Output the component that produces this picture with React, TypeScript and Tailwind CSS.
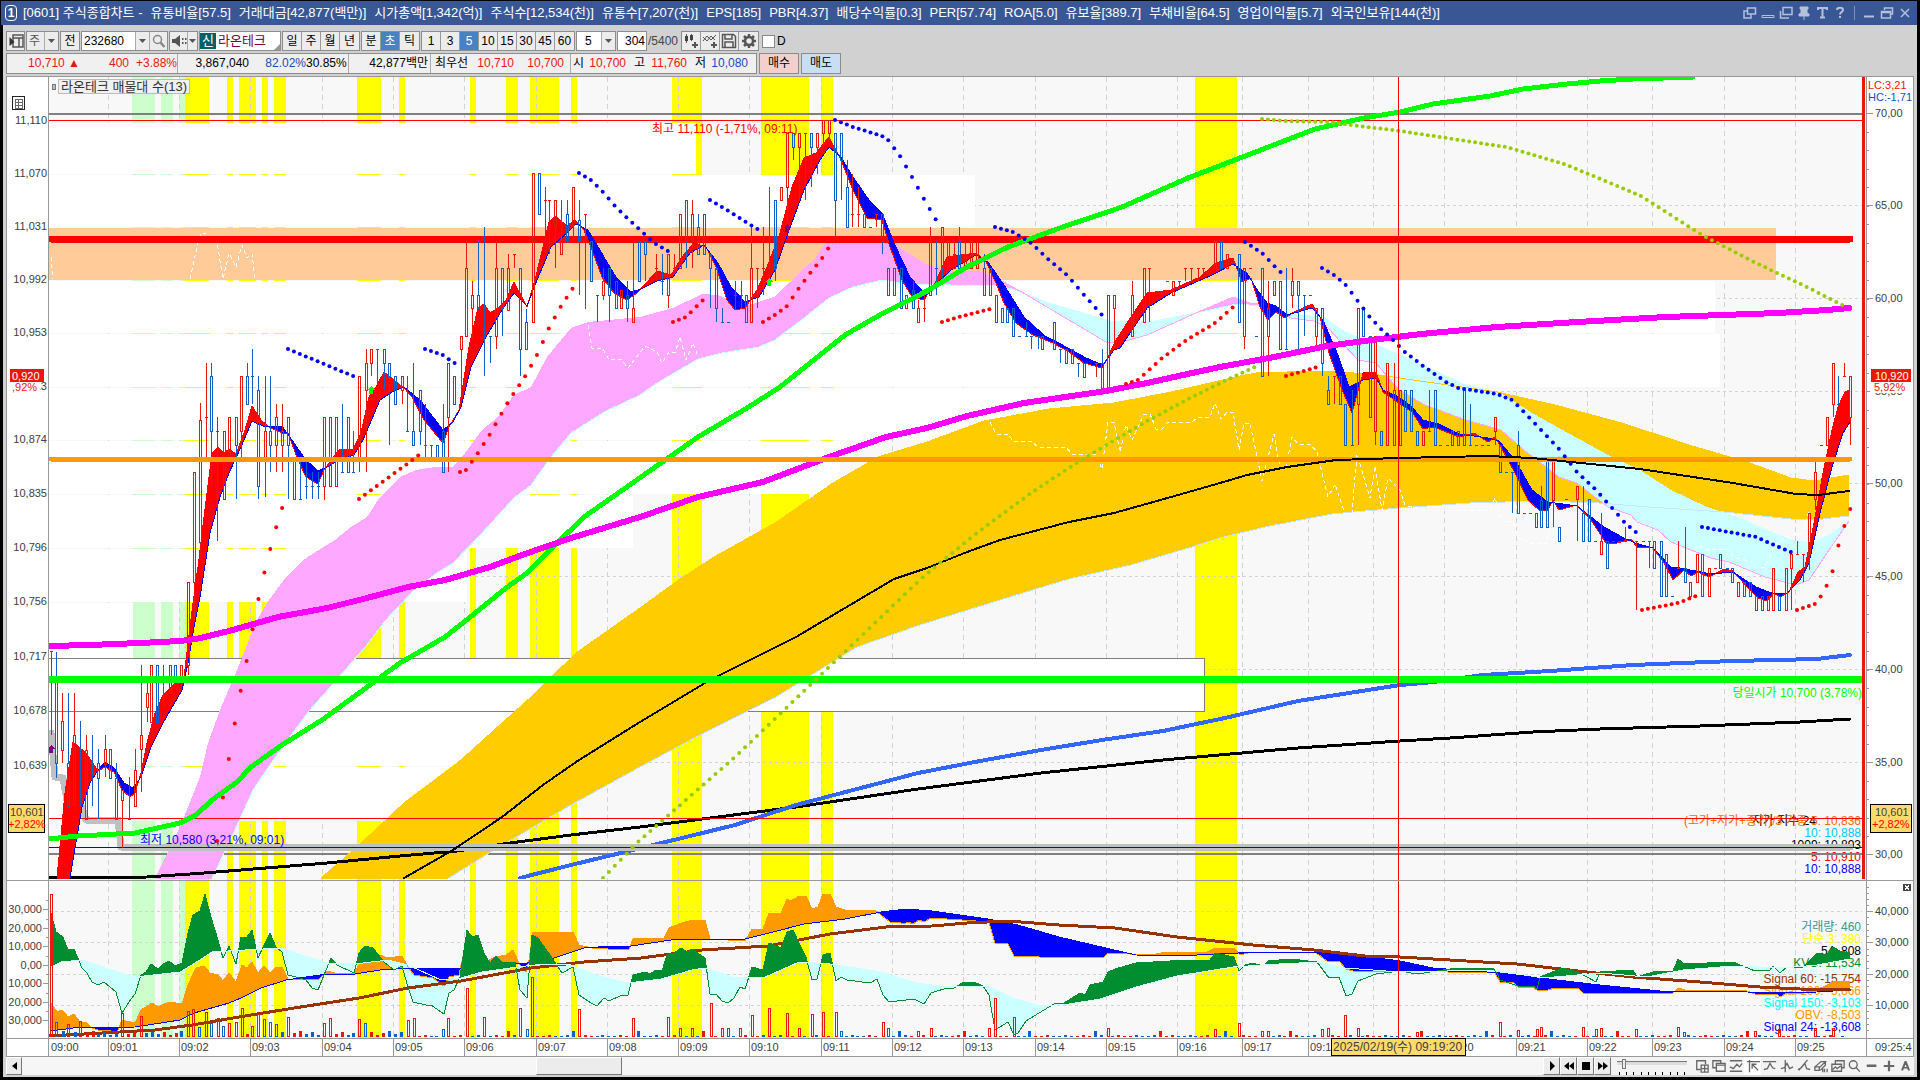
import { type ReactNode } from 'react';

type Point = [number, number];

const FONT = "font-['Liberation_Sans','Noto_Sans_CJK_KR',sans-serif]";

/* ---------- 좌표 유틸 ---------- */

function parse(text: string): Point[] {
  return text
    .trim()
    .split(/\s+/)
    .map((pair) => pair.split(',').map(Number) as Point);
}

function valueAt(points: Point[], x: number) {
  const i = points.findIndex((p) => p[0] >= x);
  if (i === -1) return points[points.length - 1][1];
  if (i === 0) return points[0][1];
  const [x0, y0] = points[i - 1];
  const [x1, y1] = points[i];
  return x1 === x0 ? y1 : y0 + ((y1 - y0) * (x - x0)) / (x1 - x0);
}

function toPolygon(points: Point[]) {
  return points.map(([x, y]) => `${x},${y.toFixed(1)}`).join(' ');
}

// 두 선 사이를 위/아래 구간으로 나눠 채운다
function splitBand(fast: Point[], slow: Point[]) {
  const start = Math.max(fast[0][0], slow[0][0]);
  const end = Math.min(fast[fast.length - 1][0], slow[slow.length - 1][0]);
  const above: Point[] = [];
  const below: Point[] = [];
  const base: Point[] = [];
  for (let x = start; x <= end; x += 1) {
    const f = valueAt(fast, x);
    const s = valueAt(slow, x);
    above.push([x, Math.min(f, s)]);
    below.push([x, Math.max(f, s)]);
    base.unshift([x, s]);
  }
  return { above: toPolygon([...above, ...base]), below: toPolygon([...below, ...base]) };
}

/* ---------- 메인 차트 데이터 ---------- */

const TIMES: [number, string][] = [
  [108, '09:01'],
  [179, '09:02'],
  [250, '09:03'],
  [322, '09:04'],
  [393, '09:05'],
  [464, '09:06'],
  [536, '09:07'],
  [607, '09:08'],
  [678, '09:09'],
  [749, '09:10'],
  [821, '09:11'],
  [892, '09:12'],
  [963, '09:13'],
  [1035, '09:14'],
  [1106, '09:15'],
  [1177, '09:16'],
  [1242, '09:17'],
  [1308, '09:18'],
  [1373, ''],
  [1444, '09:20'],
  [1516, '09:21'],
  [1587, '09:22'],
  [1652, '09:23'],
  [1724, '09:24'],
  [1795, '09:25'],
];

const YELLOW_BANDS = [
  [185, 209], [227, 233], [239, 256], [262, 268], [274, 286], [357, 381], [399, 405],
  [470, 476], [506, 518], [530, 559], [571, 577], [672, 702], [761, 809], [821, 833], [1195, 1237],
];
const GREEN_BANDS = [[132, 155], [161, 173], [179, 185]];

// 매물대: [y, 높이, 오른쪽 끝]
const PROFILE = [
  [123, 51, 696], [175, 52, 975], [281, 52, 1715], [334, 53, 1720], [388, 52, 1190],
  [441, 53, 840], [495, 53, 633], [549, 53, 467], [603, 55, 133], [712, 54, 560], [767, 54, 540],
];

const PINK_LINE = parse(`155,878 180,827 200,777 208,743 220,710 237,670 257,620 269,600 286,577 306,558
  335,540 351,527 367,517 380,497 400,477 416,470 435,467 453,467 465,453 482,430 498,417 514,395 531,387
  547,357 571,328 588,322 640,317 673,308 702,294 718,295 735,302 751,305 775,297 796,277 816,258 829,238
  886,235 902,250 927,265 943,271 980,272 1000,280 1020,291 1106,342 1118,343 1147,335 1196,313 1233,297
  1250,303 1265,305 1291,318 1314,321 1327,327 1358,360 1376,363 1399,390 1425,405 1466,420 1501,430
  1524,450 1559,477 1577,483 1608,507 1631,515 1637,522 1658,530 1671,542 1711,558 1729,562 1765,577
  1796,585 1809,580 1827,553 1849,521`);
const CYAN_LINE = parse(`212,878 229,843 253,790 282,747 310,710 339,677 367,645 384,622 416,588 437,573
  453,563 482,533 514,498 531,485 551,457 571,433 604,412 640,395 657,383 698,359 722,353 759,347 775,340
  804,318 829,298 853,287 882,280 910,284 951,285 992,285 1012,289 1049,303 1090,315 1110,321 1155,321
  1196,313 1237,304 1260,306 1296,315 1323,317 1345,332 1372,343 1412,360 1461,383 1501,393 1532,413
  1559,428 1608,455 1640,470 1671,490 1707,507 1738,517 1774,533 1796,541 1814,542 1832,533 1849,520`);
const GOLD_TOP = parse(`321,878 359,845 404,803 461,760 531,697 576,653 640,608 680,579 714,557 775,523
  833,483 878,457 927,442 984,421 1049,409 1114,403 1171,392 1240,376 1256,373 1318,371 1372,374 1434,383
  1497,392 1555,405 1622,423 1689,445 1747,462 1791,478 1814,481 1849,475`);
const GOLD_BOTTOM = parse(`449,878 494,850 571,805 640,767 700,735 776,697 857,647 920,625 1000,600
  1069,579 1131,565 1192,547 1220,538 1265,527 1332,514 1399,508 1470,503 1541,501 1599,503 1649,507
  1724,512 1791,519 1814,520 1849,516`);
const MAGENTA = `49,646 90,645 140,643 180,641 196,639 229,631 278,617 327,608 367,598 408,587 445,580
  490,567 522,555 571,538 640,517 698,497 763,482 829,457 886,437 927,428 967,416 1024,403 1065,397
  1106,391 1147,383 1192,373 1220,367 1274,357 1327,346 1372,340 1421,334 1497,327 1577,322 1666,317
  1778,313 1827,310 1849,308`;
const GREEN = `49,839 78,836 135,833 180,823 196,815 212,800 237,782 251,767 282,745 322,720 359,693
  400,663 445,637 469,618 506,588 527,573 551,549 584,517 641,477 698,437 747,408 780,387 845,335 878,316
  927,291 967,267 1008,247 1057,229 1122,207 1188,178 1240,158 1315,129 1364,118 1400,112 1433,104
  1490,96 1523,89 1567,84 1600,81 1633,79 1693,77`;
const BLACK_MID = `404,878 453,850 502,817 543,785 576,762 640,722 710,680 796,637 894,579 927,568 967,552
  1000,540 1069,522 1114,513 1171,497 1220,483 1247,475 1287,467 1336,460 1399,458 1488,456 1532,458
  1640,469 1733,483 1796,494 1818,495 1849,491`;
const BLACK_LOW = `49,878 147,877 204,873 327,863 400,856 457,851 510,843 571,835 640,827 796,807 918,789
  1041,773 1163,760 1298,748 1400,741 1450,738 1533,732 1600,729 1700,726 1800,722 1850,719`;
const BLUE_LOW = `520,878 571,865 633,850 735,825 796,805 857,789 918,773 980,761 1041,750 1102,740
  1163,731 1225,718 1298,701 1400,685 1433,682 1483,675 1550,671 1633,665 1733,661 1817,659 1850,655`;

const MA_FAST = parse(`57,878 65,793 73,742 86,753 98,771 105,767 114,772 122,790 130,797 135,793 141,773
  147,743 155,713 163,695 175,683 184,677 190,627 196,580 198,567 204,517 209,477 212,453 218,447 224,453
  229,449 236,454 245,430 252,406 261,420 269,427 282,433 288,433 298,460 306,477 318,484 324,470 339,450
  353,449 361,433 369,397 376,387 384,372 394,380 404,388 412,397 424,420 443,443 449,427 459,410 469,347
  478,308 484,304 490,313 498,308 506,300 514,282 527,307 535,280 549,222 555,216 567,226 575,220 584,230
  592,250 602,277 614,293 627,300 637,293 657,271 671,275 682,257 694,243 706,247 716,267 727,300 735,310
  745,308 757,290 767,267 780,233 792,187 804,158 816,153 829,137 841,160 853,190 867,218 882,220 890,247
  902,280 912,297 924,300 935,283 947,257 976,253 986,262 996,283 1004,303 1016,323 1033,335 1053,343
  1069,352 1084,363 1102,368 1108,357 1116,340 1129,320 1147,293 1171,290 1200,277 1216,263 1233,258
  1242,282 1251,278 1260,307 1268,320 1276,312 1285,318 1294,312 1312,304 1320,317 1329,353 1341,387
  1352,413 1363,373 1376,372 1383,392 1399,403 1412,412 1423,429 1434,427 1459,437 1474,433 1488,442
  1495,437 1501,447 1515,473 1528,500 1539,510 1548,510 1553,500 1559,510 1577,505 1591,520 1606,543
  1617,543 1631,539 1637,547 1653,548 1664,563 1673,580 1684,570 1691,576 1698,572 1709,577 1724,569
  1733,571 1747,587 1758,598 1767,601 1774,593 1780,597 1789,592 1798,572 1805,567 1814,523 1823,473
  1832,430 1838,407 1845,392 1850,390`);
const MA_SLOW = parse(`57,950 70,878 82,807 90,783 98,770 105,762 114,768 124,783 133,788 141,777 151,747
  163,723 182,690 188,663 194,627 200,597 210,533 220,497 229,473 241,447 252,421 265,427 282,426 294,443
  306,460 318,471 327,467 339,460 354,455 363,440 380,400 392,392 404,387 420,400 443,430 453,422 461,407
  471,367 486,337 502,310 514,293 527,306 537,280 551,247 567,233 576,224 588,230 604,257 616,277 631,292
  641,289 657,281 673,277 690,253 704,245 718,263 731,287 745,302 759,297 775,270 788,233 804,190 820,160
  829,147 841,157 853,177 869,200 882,213 894,243 910,277 924,293 935,285 951,270 976,255 988,262
  1004,285 1024,317 1045,336 1057,342 1086,358 1103,365 1114,350 1120,348 1147,308 1171,293 1212,275
  1233,264 1247,273 1256,288 1267,303 1276,306 1287,315 1312,308 1323,320 1338,355 1349,387 1363,380
  1376,378 1383,390 1399,397 1412,407 1423,420 1439,424 1459,434 1488,438 1499,441 1515,460 1532,490
  1548,502 1577,506 1604,527 1622,537 1635,543 1653,548 1671,567 1680,568 1711,574 1733,572 1756,587
  1774,594 1787,593 1800,580 1809,563 1820,513 1832,467 1843,433 1850,422`);

// [x, 고가, 몸통 위, 몸통 아래, 저가]
const RISING = [
  [51,651,651,651,735],[62,693,721,750,763],[74,693,735,805,805],[86,735,750,819,819],[105,735,749,764,777],
  [122,790,790,800,848],[135,749,770,806,806],[141,665,735,749,792],[147,680,693,707,722],[151,665,665,722,722],
  [163,665,680,680,707],[170,665,665,693,693],[181,665,665,680,680],[188,582,582,665,675],[194,472,472,582,620],
  [200,403,420,542,560],[206,363,417,417,458],[229,417,417,458,458],[241,376,376,431,458],[265,376,431,458,497],
  [276,404,417,445,472],[282,404,431,445,472],[324,417,417,486,500],[330,417,417,486,486],[336,417,417,486,486],
  [359,376,376,458,472],[366,349,363,390,472],[371,349,349,363,376],[377,349,349,349,384],[402,376,376,390,404],
  [448,363,363,417,472],[461,336,336,349,392],[466,241,268,336,336],[472,281,295,308,340],[496,241,268,336,349],
  [508,254,268,310,310],[514,254,254,254,268],[533,173,173,322,322],[545,187,200,200,241],[549,200,200,200,254],
  [555,200,200,227,268],[561,200,240,254,254],[573,187,187,225,240],[585,214,214,214,309],[603,268,281,295,300],
  [621,290,290,308,308],[633,240,308,322,322],[656,254,268,268,281],[668,254,254,295,308],[674,254,268,268,268],
  [680,214,214,268,268],[692,200,214,241,268],[735,281,295,295,310],[751,227,268,322,322],[757,268,268,268,308],
  [763,227,268,268,295],[769,187,268,268,268],[781,187,187,200,200],[787,133,133,187,227],[799,133,133,147,200],
  [805,133,133,133,200],[817,133,133,147,174],[823,120,120,133,147],[829,120,120,133,140],[852,174,214,214,227],
  [858,187,214,214,227],[876,214,214,214,227],[906,295,295,308,308],[918,300,308,322,322],[924,295,308,308,322],
  [930,227,241,295,295],[948,241,241,268,268],[954,241,254,268,268],[965,241,254,268,268],[971,241,241,268,268],
  [977,241,241,268,268],[1066,349,349,363,363],[1084,363,363,377,377],[1096,363,363,363,377],[1108,295,295,391,391],
  [1114,295,295,308,349],[1132,281,295,336,336],[1144,268,268,322,322],[1149,268,268,268,322],[1167,281,281,281,281],
  [1173,281,281,295,295],[1179,281,281,281,290],[1185,268,268,268,281],[1191,268,268,268,281],[1198,268,268,268,281],
  [1203,268,268,268,275],[1215,241,241,268,268],[1227,254,254,268,268],[1244,268,268,336,349],[1250,268,268,268,268],
  [1268,281,308,336,376],[1274,281,281,295,295],[1292,268,281,295,308],[1316,308,308,336,349],[1334,376,376,376,404],
  [1358,308,308,404,445],[1375,336,336,431,445],[1387,363,363,445,445],[1394,363,390,445,445],[1400,390,390,445,445],
  [1423,431,431,445,445],[1429,390,431,431,431],[1495,417,417,431,445],[1553,458,458,500,527],[1566,499,499,499,499],
  [1577,486,486,499,541],[1601,513,541,554,554],[1625,527,541,541,541],[1636,541,541,541,610],[1643,541,541,541,541],
  [1649,541,541,541,568],[1678,541,568,568,568],[1690,582,582,596,596],[1697,554,554,582,582],[1709,568,568,596,596],
  [1715,568,568,568,568],[1738,582,582,596,596],[1768,596,596,610,610],[1773,568,568,610,610],[1786,568,568,610,610],
  [1791,550,554,568,610],[1797,541,554,554,554],[1803,554,554,554,582],[1809,513,513,554,570],[1815,458,472,499,510],
  [1821,445,445,445,445],[1827,417,417,445,445],[1833,363,363,404,417],[1844,363,376,376,376],[1850,376,376,417,445],
];
const FALLING = [
  [56,652,680,763,778],[68,693,763,806,806],[80,721,749,749,806],[92,735,763,763,806],[98,749,763,778,819],
  [110,749,749,778,778],[116,763,778,819,819],[129,777,819,819,819],[157,665,665,722,722],[175,665,665,680,680],
  [211,363,376,431,486],[217,417,431,431,541],[224,431,431,499,499],[236,417,417,445,499],[247,363,376,404,404],
  [252,349,376,376,404],[258,376,390,486,499],[270,376,431,445,472],[288,417,417,445,499],[294,458,458,499,499],
  [300,458,499,499,499],[306,458,486,486,499],[312,472,486,486,499],[318,472,486,486,499],[342,404,472,472,472],
  [348,417,417,472,472],[353,431,472,472,472],[384,349,349,363,390],[389,363,363,376,445],[395,376,376,404,404],
  [407,376,431,431,431],[413,363,431,445,445],[420,390,390,431,445],[425,404,445,445,458],[431,445,445,445,458],
  [437,445,445,458,458],[443,404,431,472,472],[454,376,376,404,404],[478,241,295,308,308],[484,227,308,308,376],
  [490,336,336,336,363],[502,268,268,308,336],[520,268,268,349,376],[526,309,322,349,349],[539,173,173,214,214],
  [567,200,214,241,241],[579,200,220,241,295],[591,241,241,281,281],[597,295,295,295,322],[609,268,268,295,322],
  [616,281,281,308,308],[627,281,295,308,322],[639,241,241,281,281],[645,241,241,254,281],[662,254,281,281,295],
  [686,200,200,241,268],[698,214,227,254,254],[704,214,214,254,254],[710,254,254,268,308],[716,268,268,308,322],
  [722,308,322,322,322],[728,322,322,322,322],[741,281,295,295,308],[746,295,295,322,322],[775,200,200,268,281],
  [793,133,133,147,160],[811,133,133,147,187],[835,133,133,200,241],[841,133,133,160,200],[847,160,187,227,227],
  [864,214,214,227,227],[870,227,227,227,227],[882,214,214,241,254],[888,268,268,295,295],[894,268,268,295,295],
  [901,268,268,308,308],[913,281,290,308,308],[936,241,268,268,295],[942,227,227,268,281],[959,227,241,268,268],
  [984,254,268,295,295],[990,268,268,295,295],[996,295,295,322,322],[1002,308,308,322,322],[1007,308,308,322,322],
  [1013,308,308,336,336],[1019,336,336,336,336],[1026,322,336,336,336],[1031,336,336,336,349],[1038,336,336,336,349],
  [1042,336,336,349,349],[1054,322,322,349,349],[1060,349,349,349,363],[1072,349,349,363,363],[1078,363,363,363,377],
  [1102,349,363,391,391],[1221,241,241,268,268],[1239,254,254,322,322],[1256,336,336,336,336],[1262,268,268,376,376],
  [1280,281,281,349,349],[1286,268,349,349,349],[1298,281,281,295,349],[1304,295,295,295,336],[1310,295,295,295,295],
  [1322,308,308,363,376],[1328,376,390,404,404],[1340,376,376,404,404],[1345,404,404,445,445],[1352,390,445,445,445],
  [1363,308,308,336,336],[1370,336,336,417,417],[1381,431,431,445,445],[1405,390,390,431,431],[1411,390,390,431,431],
  [1417,431,431,445,445],[1435,390,390,445,445],[1440,445,445,445,445],[1447,445,445,445,445],[1452,431,431,445,445],
  [1458,431,431,445,445],[1464,390,390,445,445],[1470,404,445,445,445],[1476,445,445,445,445],[1482,445,445,445,445],
  [1488,445,445,445,445],[1500,445,445,472,472],[1506,472,472,472,472],[1512,472,472,472,513],[1518,431,445,513,513],
  [1524,513,513,513,513],[1530,513,513,513,513],[1536,513,513,527,527],[1541,486,500,527,527],[1547,458,458,527,527],
  [1559,527,527,541,541],[1583,486,513,541,541],[1589,499,499,541,541],[1595,541,541,541,541],[1607,541,541,568,568],
  [1613,541,541,541,541],[1619,541,541,541,541],[1654,541,541,568,568],[1661,541,541,596,596],[1666,554,554,596,596],
  [1672,596,596,596,596],[1685,527,568,582,582],[1702,554,554,596,596],[1720,554,554,568,568],[1727,568,568,568,568],
  [1732,568,568,582,582],[1744,582,582,596,596],[1750,582,582,596,596],[1756,596,596,610,610],[1762,596,596,610,610],
  [1779,596,596,610,610],[1838,376,404,404,404],
];

const SAR_BLUE = [
  '288,349 353,376',
  '425,349 443,355 454,363',
  '579,173 591,180 603,192 615,206 627,218 639,229 654,243 668,251',
  '710,200 722,207 757,229',
  '835,120 853,127 882,136 888,140 900,156 912,177 924,199 936,220',
  '995,227 1013,232 1031,243 1048,259 1067,275 1084,295 1102,315',
  '1245,242 1262,253 1280,272',
  '1322,268 1334,275 1345,284 1357,300 1369,316 1381,329 1393,340 1405,352 1423,366 1446,382 1458,388 1497,394 1512,400 1524,412 1541,430 1559,449 1577,472 1595,489 1613,509 1625,523 1637,533',
  '1702,527 1756,537 1774,545 1791,552',
];
const SAR_RED = [
  '217,841 223,797 229,758 235,722 241,689 247,659 252,632 258,601 264,574 270,550 276,528 282,508',
  '359,499 407,464 419,455',
  '460,472 466,470 478,453 490,434 508,402 526,375 538,353 549,328 561,306 573,288',
  '673,322 686,317 704,299',
  '763,322 775,315 787,306 799,288 811,272 823,257 829,247',
  '942,322 959,317 990,309',
  '1126,384 1138,380 1161,359 1185,341 1215,323 1233,307',
  '1286,376 1304,371 1317,367',
  '1642,610 1678,603 1696,596',
  '1797,610 1815,604 1821,596 1827,585 1833,570 1838,547 1844,527 1850,509',
];
const SAR_OLIVE = [
  '603,878 639,841 735,757 924,576 978,532 1031,493 1078,462 1108,444 1149,420 1192,397 1233,377 1257,366',
  '1262,119 1286,121 1329,122 1351,125 1400,131 1506,147 1567,165 1641,196 1702,235 1756,263 1809,288 1842,305',
];

const WHITE_DASHES = [
  '51,257 53,279',
  '190,279 198,243 201,233 206,234 212,241 217,242 223,279 229,253 236,267 242,245 247,258 252,254 255,279',
  '486,304 490,318 498,312',
  '588,325 592,348 603,349 609,360 621,359 628,368 645,346 657,352 662,363 669,352 675,353 680,337 686,360 693,343 698,357',
  '990,422 996,434 1008,434 1013,441 1031,441 1038,447 1066,447 1072,454 1096,454 1102,469 1108,422 1114,422 1120,452 1126,425 1132,440 1144,414 1150,414 1156,429 1162,429 1168,422 1192,422 1198,417 1210,417 1215,403 1221,419 1227,412 1233,412 1239,450 1244,423 1250,423 1262,481 1274,434 1280,468 1286,468 1292,437 1298,444 1311,445 1317,452 1328,497 1335,484 1345,514 1352,513 1357,454 1370,498 1375,466 1382,510 1388,478 1400,490 1405,505 1421,510 1490,510 1495,498 1502,521 1513,521 1518,538 1530,543 1546,544 1552,520',
  '1690,555 1697,545 1705,549 1727,549 1735,558 1750,561 1758,568 1765,567 1775,545 1790,535 1803,533 1809,510',
];

const ARROWS = [
  { x: 371, y: 386, color: '#00ff00' },
  { x: 769, y: 278, color: '#00ff00' },
  { x: 787, y: 224, color: '#800080' },
  { x: 51, y: 745, color: '#800080' },
];

/* ---------- 보조 차트 데이터 ---------- */

const OBV = parse(`51,1003 57,1012 62,1010 68,1017 74,1014 80,1022 87,1023 92,1028 98,1030 110,1030 116,1035
  122,1020 135,1023 141,1010 152,1003 158,1007 169,1002 182,1004 188,985 196,968 204,966 210,973 218,975
  223,981 229,973 236,982 242,965 247,968 252,962 258,973 264,966 270,973 276,967 282,967 288,979 318,980
  327,971 335,973 353,974 361,962 367,955 380,955 388,958 402,956 408,967 414,975 433,978 444,986 449,977
  459,975 466,942 473,943 480,948 484,962 496,957 506,955 513,950 520,965 526,972 529,960 533,932 573,932
  579,945 592,948 608,949 629,949 633,939 664,938 669,928 682,923 692,920 705,920 710,939 745,941 752,929
  763,929 769,913 781,913 787,899 791,901 799,896 806,896 812,909 818,907 823,894 830,894 836,907 845,910
  875,910 881,915 890,922 898,922 904,924 908,922 913,924 919,920 924,922 931,918 962,920 989,922 995,943
  1008,944 1014,956 1039,957 1103,958 1108,953 1151,955 1166,952 1207,952 1215,948 1234,948 1240,955
  1248,953 1314,952 1319,955 1327,961 1339,961 1346,969 1353,971 1400,971 1495,973 1500,982 1513,982
  1518,987 1533,987 1537,990 1548,990 1555,988 1578,988 1583,993 1673,993 1678,988 1685,990 1747,991
  1755,994 1777,994 1780,997 1787,993 1803,993 1823,987 1833,982 1850,981`);
const OBV_SIGNAL = parse(`51,1031 73,1028 135,1027 180,1020 194,1013 229,1003 241,998 261,988 286,980 327,974
  355,974 380,970 412,968 461,969 490,964 527,963 551,959 584,948 612,946 631,946 671,940 702,939 745,939
  773,932 804,924 845,919 881,912 906,909 932,911 988,919 1018,925 1059,937 1110,949 1136,955 1177,956
  1238,953 1319,952 1355,955 1400,961 1433,968 1500,973 1540,978 1600,985 1660,991 1747,992 1800,993
  1850,990`);
const BROWN = `49,1036 102,1033 155,1030 192,1025 245,1016 294,1008 359,998 408,988 461,981 531,968 584,962
  641,958 702,950 768,946 830,934 886,927 932,926 967,923 1008,921 1059,925 1115,928 1177,937 1253,945
  1314,950 1365,956 1400,957 1483,962 1517,964 1587,972 1633,977 1700,982 1760,987 1800,989 1850,990`;
const KVO = parse(`51,913 56,932 63,937 68,950 74,949 82,968 87,973 92,982 98,985 104,982 116,992 122,1013
  129,1002 135,994 141,975 146,972 151,964 158,969 163,964 169,961 175,966 182,963 188,933 193,915 200,911
  205,894 211,917 218,940 223,958 229,946 236,964 241,937 247,937 252,930 258,958 264,945 270,933 276,947
  282,952 288,975 300,978 306,980 312,988 318,990 324,975 331,958 337,965 354,973 359,953 365,946 373,948
  384,962 394,970 402,966 408,987 413,1002 426,1005 431,1005 444,1014 449,993 454,990 460,977 467,930
  472,937 478,935 484,953 490,963 496,956 502,962 515,962 520,990 527,998 532,935 538,938 550,955 562,973
  573,967 579,995 591,1003 597,1006 604,998 609,1001 620,996 628,995 633,975 645,972 650,974 656,970
  662,971 667,955 674,953 681,948 687,952 692,949 705,958 710,994 716,994 722,1001 728,1003 734,998
  740,987 745,989 752,967 763,970 769,943 781,948 787,932 793,930 799,943 806,957 812,980 817,979 823,955
  830,953 836,981 841,977 847,980 870,983 877,979 883,995 889,1002 914,999 924,1004 931,993 947,988
  954,988 962,983 974,982 983,986 989,995 995,1030 1008,1022 1014,1035 1018,1033 1026,1021 1039,1013
  1054,1004 1064,1003 1080,993 1085,995 1090,985 1103,982 1108,972 1115,969 1136,963 1187,960 1192,961
  1210,960 1215,953 1234,957 1239,971 1245,965 1253,963 1263,966 1268,961 1291,959 1317,962 1329,978
  1339,977 1346,996 1352,994 1358,981 1376,974 1400,971 1417,974 1450,969 1457,968 1493,968 1497,973
  1500,980 1518,986 1533,986 1537,989 1540,977 1550,973 1563,968 1578,972 1587,977 1596,982 1600,972
  1633,970 1637,977 1653,972 1673,971 1678,959 1683,963 1702,964 1712,962 1733,962 1755,971 1770,970
  1773,966 1780,973 1787,967 1803,967 1817,953 1827,955 1833,947 1840,951 1850,953`);
const KVO_SIGNAL = parse(`51,967 61,962 82,960 106,968 135,977 180,972 192,965 212,952 245,950 282,948 302,955
  327,963 355,964 388,960 408,965 441,980 461,978 482,972 510,968 543,964 571,965 596,975 628,983 661,979
  692,970 705,968 733,977 763,978 799,962 830,964 881,972 916,983 947,987 988,986 1013,998 1039,1006
  1069,1004 1100,999 1136,987 1177,976 1233,967 1279,964 1319,962 1345,968 1400,972 1495,970 1543,978
  1600,973 1647,977 1683,970 1733,966 1783,968 1817,965 1850,959`);

const VOLUME_UP: Point[] = parse(`51,894 68,1024 80,1021 122,1013 141,1016 188,1011 193,1009 206,1012 218,1018
  229,1023 236,1022 242,1008 252,1026 258,1014 288,1017 324,1023 330,1018 359,1019 408,1020 414,1018
  448,1018 467,988 484,1017 520,1008 532,977 579,1009 633,1018 668,1017 680,1028 692,1028 711,1003
  722,1028 740,1028 752,1015 769,1008 787,1013 799,1028 812,1014 823,1012 836,1012 883,1022 918,1031
  931,1028 989,1028 995,998 1014,1017 1108,1028 1215,1029 1239,1023 1262,1031 1268,1031 1322,1029
  1328,1028 1345,1015 1358,1028 1417,1032 1500,1022 1518,1030 1537,1029 1541,1027 1583,1027 1596,1029
  1601,1028 1636,1029 1678,1027 1755,1031 1779,1029 1815,1028 1833,1028`);
const VOLUME_DOWN: Point[] = parse(`56,1022 199,1027 211,1023 223,1026 264,1019 270,1022 276,1024 365,1023
  527,1029 443,1029 728,1028 841,1031 888,1028 1684,1032`);

/* ---------- 차트 조각 ---------- */

function Candles({ items, color }: { items: number[][]; color: string }) {
  return (
    <g stroke={color} fill="none" strokeWidth="1">
      {items.map(([x, high, top, bottom, low]) =>
        bottom - top < 2 ? (
          <path key={x} d={`M${x - 1} ${top + 0.5}h3M${x + 0.5} ${high}V${low}`} />
        ) : (
          <path
            key={x}
            d={`M${x + 0.5} ${high}V${top}M${x + 0.5} ${bottom}V${low}M${x - 0.5} ${top + 0.5}h2V${bottom + 0.5}h-2Z`}
          />
        ),
      )}
    </g>
  );
}

function Dots({ lines, color }: { lines: string[]; color: string }) {
  return (
    <g fill={color} shapeRendering="auto">
      {lines.map((line) => {
        const points = parse(line);
        const dots: Point[] = [];
        for (let x = points[0][0]; x <= points[points.length - 1][0] + 1; x += 5.92) {
          dots.push([x, valueAt(points, x)]);
        }
        return dots.map(([x, y]) => <circle key={`${x}-${y}`} cx={x} cy={y} r="2" />);
      })}
    </g>
  );
}

function Line({ points, color, width }: { points: string; color: string; width: number }) {
  return (
    <polyline
      points={points}
      fill="none"
      stroke={color}
      strokeWidth={width}
      strokeLinecap="round"
      strokeLinejoin="round"
    />
  );
}

function MainPane() {
  const ribbon = splitBand(MA_FAST, MA_SLOW);
  const cloud = splitBand(PINK_LINE, [[155, 940], ...CYAN_LINE]);
  const gold = splitBand(GOLD_TOP, [[321, 950], ...GOLD_BOTTOM]);
  return (
    <g clipPath="url(#main-pane)">
      {PROFILE.map(([y, height, right]) => (
        <rect key={y} x="49" y={y} width={right - 49} height={height} fill="#fff" />
      ))}
      <rect x="49" y="228" width="1727" height="52" fill="#ffcc99" />
      <rect x="48" y="658" width="1156" height="53" fill="#fff" stroke="#808080" />
      <path d="M49 113.5H1862M49 854H1862" stroke="#808080" strokeWidth="2" />

      <polygon points={gold.above} fill="#ffcc00" />
      <polygon points={cloud.above} fill="#ffa8ff" />
      <polygon points={cloud.below} fill="#ccffff" />
      <Line points={toPolygon(CYAN_LINE.slice(0, 44))} color="#ccffff" width={1} />
      <Line points={toPolygon(PINK_LINE.slice(31))} color="#ffa8ff" width={1} />
      <Line points={toPolygon(GOLD_TOP)} color="#ffcc00" width={1} />
      <Line points={toPolygon(GOLD_BOTTOM)} color="#c8e6ff" width={1} />

      {WHITE_DASHES.map((points) => (
        <polyline key={points} points={points} fill="none" stroke="#fff" strokeDasharray="4 3" />
      ))}

      <Line points={BLACK_LOW} color="#000" width={3} />
      <Line points={BLUE_LOW} color="#3366ff" width={4} />

      <Line
        points="51,733 55,777 63,778 68,806 82,807 86,820 118,820 121,847 1850,847"
        color="#c0c0c0"
        width={7}
      />
      <Line points="51,239 1850,239" color="#ff0000" width={7} />
      <path d="M49 120.5H1862M49 818.5H1862" stroke="#ff0000" />
      <path d="M49 847.5H1862" stroke="#0000ff" />
      <Line points={toPolygon(MA_SLOW)} color="#0000ff" width={1} />
      <polygon points={ribbon.above} fill="#ff0000" />
      <polygon points={ribbon.below} fill="#0000ff" />
      <Line points={toPolygon(MA_FAST)} color="#ff0000" width={1} />
      <Line points={toPolygon(MA_SLOW)} color="#0000ff" width={1} />
      <Candles items={RISING} color="#e8190a" />
      <Candles items={FALLING} color="#1060c8" />
      <Line points={GREEN} color="#00ff00" width={5} />
      <Line points={MAGENTA} color="#ff00ff" width={6} />
      <Line points="51,459 1850,459" color="#ff9900" width={5} />
      <Line points={BLACK_MID} color="#000" width={2} />
      <path d="M49 679.5H1862" stroke="#00ff00" strokeWidth="7" />
      <Dots lines={SAR_OLIVE} color="#99cc00" />
      <Dots lines={SAR_BLUE} color="#0000ff" />
      <Dots lines={SAR_RED} color="#ff0000" />
      {ARROWS.map(({ x, y, color }) => (
        <path key={x} d={`M${x} ${y}l4 4h-2v4h-4v-4h-2z`} fill={color} />
      ))}
    </g>
  );
}

function SubPane() {
  const obv = splitBand(OBV, OBV_SIGNAL);
  const kvo = splitBand(KVO, KVO_SIGNAL);
  const taken = new Set([...VOLUME_UP, ...VOLUME_DOWN].map(([x]) => Math.round((x - 51) / 5.93)));
  const fillers = Array.from({ length: 303 }, (_, i) => i).filter((i) => !taken.has(i));
  return (
    <g>
      <polygon points={obv.above} fill="#ff9900" />
      <polygon points={kvo.below} fill="#ccffff" />
      <polygon points={obv.below} fill="#0000ff" />
      <Line points={toPolygon(OBV)} color="#ff9900" width={1} />
      <Line points={toPolygon(OBV_SIGNAL)} color="#0000ff" width={1} />
      <Line points={BROWN} color="#993300" width={3} />
      <polygon points={kvo.above} fill="#008e30" />
      <Line points={toPolygon(KVO)} color="#008e30" width={1} />
      <Line points={toPolygon(KVO_SIGNAL)} color="#ccffff" width={1} />
      <g fill="none" stroke="#e8190a">
        {VOLUME_UP.map(([x, top]) => (
          <rect key={x} x={x - 0.5} y={top + 0.5} width="2" height={1036 - top} />
        ))}
      </g>
      <g fill="none" stroke="#1060c8">
        {VOLUME_DOWN.map(([x, top]) => (
          <rect key={x} x={x - 0.5} y={top + 0.5} width="2" height={1036 - top} />
        ))}
      </g>
      {fillers.map((i) => {
        const x = Math.round(51 + i * 5.93);
        const height = i < 60 ? 2 + ((i * 7) % 5) : 1 + ((i * 7) % 11 === 0 ? 5 : (i * 5) % 3 === 0 ? 1 : 0);
        return (
          <rect
            key={i}
            x={x - 1}
            y={1037 - height}
            width="3"
            height={height}
            fill={(i * 13) % 7 < 3 ? '#e8190a' : '#1060c8'}
          />
        );
      })}
    </g>
  );
}

const VALUE_LABELS: [number, string, string][] = [
  [825, '(고가+저가+종가)/3 가중 5: 10,836', '#ff6600'],
  [837, '10: 10,888', '#00c8ff'],
  [849, '1009: 10,893', '#000000'],
  [861, '5: 10,910', '#ff0000'],
  [873, '10: 10,888', '#0000ff'],
];
const INDICATOR_LABELS: [number, string, string][] = [
  [931, '거래량: 460', '#339999'],
  [943, '단순 3: 380', '#ffff00'],
  [955, '54: 808', '#000000'],
  [967, 'KVO: 11,534', '#008e30'],
  [977, 'KVO signal: 28,500', '#ccffff'],
  [983, 'Signal 60: -15,754', '#993300'],
  [995, 'Signal 100: -5,666', '#ff9900'],
  [1007, 'Signal 150: -3,103', '#00ffff'],
  [1019, 'OBV: -8,503', '#ff9900'],
  [1031, 'Signal 24: -13,608', '#0000ff'],
];

function Plot() {
  return (
    <svg
      className="h-full min-w-0 flex-1"
      viewBox="49 77 1817 979"
      preserveAspectRatio="none"
      shapeRendering="crispEdges"
      fontSize="12"
      role="img"
      aria-label="라온테크 초봉 차트"
    >
      <defs>
        <clipPath id="main-pane">
          <rect x="49" y="77" width="1817" height="802" />
        </clipPath>
      </defs>
      <rect x="49" y="77" width="1817" height="961" fill="#f8f8f8" />
      {YELLOW_BANDS.map(([left, right]) => (
        <rect key={left} x={left} y="77" width={right - left} height="961" fill="#ffff00" />
      ))}
      {GREEN_BANDS.map(([left, right]) => (
        <rect key={left} x={left} y="77" width={right - left} height="961" fill="#ccffcc" />
      ))}
      <g stroke="#d3d3d3" strokeDasharray="5 4">
        {TIMES.map(([x]) => (
          <path key={x} d={`M${x + 0.5} 77V1038`} />
        ))}
      </g>
      <g stroke="#d3d3d3" strokeDasharray="3 3">
        {[205, 298, 391, 483, 576, 669, 762, 911, 942, 974, 1005].map((y) => (
          <path key={y} d={`M49 ${y + 0.5}H1862`} />
        ))}
      </g>
      <g textAnchor="end">
        <text x="1816" y="825" fill="#000">
          저가 지수 24
        </text>
        {VALUE_LABELS.map(([y, text, color]) => (
          <text key={y} x="1861" y={y} fill={color}>
            {text}
          </text>
        ))}
        {INDICATOR_LABELS.map(([y, text, color]) => (
          <text key={y} x="1861" y={y} fill={color}>
            {text}
          </text>
        ))}
        <text x="1862" y="697" fill="#00ff00">
          당일시가 10,700 (3,78%)
        </text>
      </g>
      <MainPane />
      <text x="652" y="133" fill="#ff0000">
        최고 11,110 (-1,71%, 09:11)
      </text>
      <text x="140" y="844" fill="#0000ff">
        최저 10,580 (3,21%, 09:01)
      </text>
      <SubPane />
      <path d="M1398.5 77V1038" stroke="#ff0000" />
      <path d="M49 880.5H1866" stroke="#999" />
      <rect x="1862" y="77" width="3" height="802" fill="#e8190a" />

      {/* 시간축 */}
      <rect x="49" y="1038" width="1817" height="18" fill="#fff" />
      <path d="M49 1038.5H1866" stroke="#999" />
      <g fill="#404040" fontSize="11">
        <text x="51" y="1051">
          09:00
        </text>
        {TIMES.map(([x, label]) => (
          <g key={x}>
            <path d={`M${x + 0.5} 1039V1056`} stroke="#999" />
            <text x={x + 2} y="1051">
              {label}
            </text>
          </g>
        ))}
      </g>
      <rect x="1331" y="1038.5" width="134" height="17" fill="#ffdb6b" stroke="#000" />
      <text x="1333" y="1051" fill="#404040">
        2025/02/19(수) 09:19:20
      </text>
    </svg>
  );
}

const PRICE_TICKS: [number, string][] = [
  [120, '11,110'],
  [173, '11,070'],
  [226, '11,031'],
  [279, '10,992'],
  [332, '10,953'],
  [386, '10,913'],
  [439, '10,874'],
  [493, '10,835'],
  [547, '10,796'],
  [601, '10,756'],
  [656, '10,717'],
  [710, '10,678'],
  [765, '10,639'],
];
const LEFT_TICKS: [number, string][] = [
  [909, '30,000'],
  [928, '20,000'],
  [946, '10,000'],
  [965, '0,00'],
  [983, '10,000'],
  [1002, '20,000'],
  [1020, '30,000'],
];

function LeftAxis() {
  return (
    <svg
      className="h-full w-[42px] shrink-0 border-r border-[#999] bg-white"
      viewBox="7 77 41 979"
      preserveAspectRatio="none"
      shapeRendering="crispEdges"
      fontSize="11"
      fill="#404040"
      aria-hidden="true"
    >
      <g textAnchor="end">
        {PRICE_TICKS.map(([y, label]) => (
          <text key={y} x="47" y={y + 4}>
            {label}
          </text>
        ))}
        {LEFT_TICKS.map(([y, label]) => (
          <text key={y} x="42" y={y + 4}>
            {label}
          </text>
        ))}
      </g>
      <path
        d="M43 909.5h5M43 928.5h5M43 946.5h5M43 965.5h5M43 983.5h5M43 1002.5h5M43 1020.5h5M46 900.5h2M46 919.5h2M46 937.5h2M46 956.5h2M46 974.5h2M46 993.5h2M46 1011.5h2M7 880.5h41M7 1038.5h41"
        stroke="#999"
      />
      <g fill="none" stroke="#222">
        <rect x="12.5" y="96.5" width="12" height="13" strokeWidth="1" />
        <path d="M15 99.5h8M15 102.5h8M15 105.5h8M15 108.5h8M15.5 99v10M18.5 99v10M22.5 99v10" stroke="#666" />
      </g>
      <rect x="7" y="382" width="33" height="11" fill="#fff" />
      <rect x="10" y="369" width="34" height="13" fill="#e8190a" />
      <text x="12" y="380" fill="#fff">
        0,920
      </text>
      <text x="12" y="391" fill="#e8190a">
        ,92%
      </text>
      <rect x="8.5" y="804.5" width="36" height="28" fill="#ffdb6b" stroke="#000" />
      <text x="10" y="816">
        10,601
      </text>
      <text x="8" y="828" fill="#ff0000">
        +2,82%
      </text>
    </svg>
  );
}

const RIGHT_TICKS: [number, string][] = [
  [113, '70,00'],
  [205, '65,00'],
  [298, '60,00'],
  [391, '55,00'],
  [483, '50,00'],
  [576, '45,00'],
  [669, '40,00'],
  [762, '35,00'],
  [854, '30,00'],
  [911, '40,000'],
  [942, '30,000'],
  [974, '20,000'],
  [1005, '10,000'],
];

function RightAxis() {
  const minor = Array.from({ length: 40 }, (_, i) => Math.round(113 + i * 18.55));
  return (
    <svg
      className="h-full w-[48px] shrink-0 border-x border-[#999] bg-white"
      viewBox="1867 77 46 979"
      preserveAspectRatio="none"
      shapeRendering="crispEdges"
      fontSize="11"
      fill="#404040"
      aria-hidden="true"
    >
      {RIGHT_TICKS.map(([y, label]) => (
        <g key={y}>
          <path d={`M1867 ${y + 0.5}h6`} stroke="#999" />
          <text x="1875" y={y + 4}>
            {label}
          </text>
        </g>
      ))}
      {minor.map((y) => (
        <path key={y} d={`M1867 ${y + 0.5}h2`} stroke="#999" />
      ))}
      {[887, 893, 899, 905, 917, 924, 930, 936, 949, 955, 961, 968, 980, 986, 993, 999, 1011, 1018, 1024, 1030].map(
        (y) => (
          <path key={y} d={`M1867 ${y + 0.5}h2`} stroke="#999" />
        ),
      )}
      <text x="1868" y="89" fill="#e8190a">
        LC:3,21
      </text>
      <text x="1868" y="101" fill="#1050c0">
        HC:-1,71
      </text>
      <rect x="1870" y="382" width="40" height="11" fill="#fff" />
      <rect x="1871" y="369" width="40" height="13" fill="#e8190a" />
      <text x="1875" y="380" fill="#fff">
        10,920
      </text>
      <text x="1874" y="391" fill="#e8190a">
        5,92%
      </text>
      <rect x="1870.5" y="804.5" width="41" height="28" fill="#ffdb6b" stroke="#000" />
      <text x="1875" y="816">
        10,601
      </text>
      <text x="1872" y="828" fill="#ff0000">
        +2,82%
      </text>
      <rect x="1903" y="884" width="8" height="7" fill="#444" />
      <path d="M1905 885.5l4 4M1909 885.5l-4 4" stroke="#fff" />
      <path d="M1867 880.5h46M1867 1038.5h46" stroke="#999" />
      <text x="1875" y="1051">
        09:25:4
      </text>
    </svg>
  );
}

/* ---------- 상단 ---------- */

const TITLE_ITEMS = [
  '[0601] 주식종합차트 -',
  '유통비율[57.5]',
  '거래대금[42,877(백만)]',
  '시가총액[1,342(억)]',
  '주식수[12,534(천)]',
  '유통수[7,207(천)]',
  'EPS[185]',
  'PBR[4.37]',
  '배당수익률[0.3]',
  'PER[57.74]',
  'ROA[5.0]',
  '유보율[389.7]',
  '부채비율[64.5]',
  '영업이익률[5.7]',
  '외국인보유[144(천)]',
];

function TitleButton({ label, children }: { label: string; children: ReactNode }) {
  return (
    <button type="button" aria-label={label} className="flex h-4 w-4 items-center justify-center">
      <svg viewBox="0 0 14 14" className="h-3.5 w-3.5" fill="none" stroke="#b4c0dc" strokeWidth="1.5">
        {children}
      </svg>
    </button>
  );
}

function TitleBar() {
  return (
    <header className="flex h-6 shrink-0 items-center bg-[#3a5795] pr-1 pl-1 text-white">
      <span className="flex h-4 w-3 items-center justify-center rounded-sm border border-white text-xs font-bold">
        1
      </span>
      <h1 className="ml-1.5 flex gap-2 text-[13px] whitespace-nowrap">
        {TITLE_ITEMS.map((item) => (
          <span key={item}>{item}</span>
        ))}
      </h1>
      <div className="ml-auto flex items-center gap-0.5">
        <TitleButton label="창 분리">
          <path d="M4.5 2h8v6h-8zM4 5H1v7h7V8" />
        </TitleButton>
        <TitleButton label="숨기기">
          <path d="M1 9.5h12v2H1z" strokeWidth="1" />
        </TitleButton>
        <TitleButton label="복사">
          <path d="M4 1.5h9v7H4zM1.5 5v7H10" />
        </TitleButton>
        <TitleButton label="고정">
          <path d="M3 1h8v2h-1v4l2 1v2H2V8l2-1V3H3zM7 10v4" fill="#b4c0dc" strokeWidth="1" />
        </TitleButton>
        <TitleButton label="글꼴">
          <path d="M3 4V2h9v2M7.5 2v9M5 11.5h5" strokeWidth="2" />
        </TitleButton>
        <TitleButton label="도움말">
          <path d="M4 4c0-3 6-3 6 0 0 2-3 2-3 4.500M7 10v2" strokeWidth="2" />
        </TitleButton>
        <span className="mx-1 h-3.5 w-px bg-[#8090b0]" />
        <TitleButton label="최소화">
          <path d="M2 10.500h10" strokeWidth="2" />
        </TitleButton>
        <TitleButton label="이전 크기로">
          <path d="M4.500 4V2h8v6h-2M1.500 5.500h9V12h-9zM1.500 6.500h9" />
        </TitleButton>
        <TitleButton label="닫기">
          <path d="M3 3l8 8M11 3l-8 8" />
        </TitleButton>
      </div>
    </header>
  );
}

const BOX = 'h-5 border border-[#8c8c8c] bg-[#ececec] text-xs leading-[18px] text-black';

function ToggleGroup({ items, selected }: { items: string[]; selected: string }) {
  return (
    <div className={`flex divide-x divide-[#9a9a9a] ${BOX}`}>
      {items.map((item) => (
        <button
          key={item}
          type="button"
          aria-pressed={item === selected}
          className={
            item === selected ? 'w-[19px] bg-[#4a80c4] text-center text-white' : 'w-[19px] text-center'
          }
        >
          {item}
        </button>
      ))}
    </div>
  );
}

function Caret({ narrow }: { narrow?: boolean }) {
  return (
    <span
      className={
        narrow
          ? 'flex h-full w-2.5 items-center justify-center border-l border-[#aaa] bg-[#ececec]'
          : 'flex h-full w-3.5 items-center justify-center border-l border-[#aaa] bg-[#ececec]'
      }
    >
      <svg viewBox="0 0 7 4" className="h-1 w-[7px]" fill="#555">
        <path d="M0 0h7l-3.500 4z" />
      </svg>
    </span>
  );
}

function IconButton({ label, children }: { label: string; children: ReactNode }) {
  return (
    <button type="button" aria-label={label} className="flex w-[17px] items-center justify-center">
      <svg viewBox="0 0 16 16" className="h-4 w-4" fill="none" stroke="#555" strokeWidth="1.500">
        {children}
      </svg>
    </button>
  );
}

function Toolbar() {
  return (
    <div className="flex h-6 items-center gap-px">
      <div className={`flex ${BOX}`}>
        <IconButton label="종목 목록">
          <path d="M5 2h10v12H5zM5 5h10M11 5v9" />
          <path d="M1.500 4v9l5-4z" fill="#333" stroke="none" />
        </IconButton>
      </div>
      <label className={`relative flex w-[33px] ${BOX}`}>
        <span className="sr-only">구분</span>
        <select className="h-full w-full appearance-none bg-transparent pl-0.5 text-[#555]" defaultValue="주">
          <option>주</option>
        </select>
        <span className="pointer-events-none absolute inset-y-0 right-0">
          <Caret />
        </span>
      </label>
      <button type="button" className={`w-5 text-center ${BOX}`}>
        전
      </button>
      <div className="flex h-5 border border-[#8c8c8c] bg-white">
        <input
          aria-label="종목코드"
          defaultValue="232680"
          className="h-full w-[53px] bg-white pl-0.5 text-xs text-black"
        />
        <Caret />
        <span className="flex border-l border-[#aaa] bg-[#ececec]">
          <IconButton label="종목 검색">
            <circle cx="6.500" cy="6.500" r="4" stroke="#888" />
            <path d="M9.500 9.500l4 4.500" stroke="#888" strokeWidth="2.500" />
          </IconButton>
        </span>
      </div>
      <div className={`flex ${BOX}`}>
        <IconButton label="음성">
          <path d="M1 6h3l5-4v12L4 10H1z" fill="#555" stroke="none" />
          <path d="M11 6h1.500M14 6h1.500M11 10h1.500M14 10h1.500" strokeWidth="2" />
        </IconButton>
        <Caret narrow />
      </div>
      <div className="flex h-5 w-[82px] items-center border border-[#8c8c8c] bg-white">
        <span className="flex h-4 w-4 items-center justify-center bg-[#006064] text-[13px] text-white">신</span>
        <span className="ml-0.5 text-[13px] text-[#7a0040]">라온테크</span>
        <svg viewBox="0 0 6 6" className="ml-auto h-1.5 w-1.5 self-end" fill="#999">
          <path d="M6 0v6H0z" />
        </svg>
      </div>
      <ToggleGroup items={['일', '주', '월', '년']} selected="" />
      <ToggleGroup items={['분', '초', '틱']} selected="초" />
      <ToggleGroup items={['1', '3', '5', '10', '15', '30', '45', '60']} selected="5" />
      <label className="relative flex h-5 w-10 border border-[#8c8c8c] bg-white text-xs text-black">
        <span className="sr-only">주기</span>
        <select className="h-full w-full appearance-none bg-transparent pl-2" defaultValue="5">
          <option>5</option>
        </select>
        <span className="pointer-events-none absolute inset-y-0 right-0">
          <Caret />
        </span>
      </label>
      <input
        aria-label="조회 개수"
        defaultValue="304"
        className="h-5 w-[30px] border border-[#8c8c8c] bg-white pr-px text-right text-xs text-black"
      />
      <span className="w-[32px] text-xs text-[#444]">/5400</span>
      <div className={`flex divide-x divide-[#9a9a9a] [&>button]:w-[19px] ${BOX}`}>
        <IconButton label="차트 유형">
          <path d="M3.500 1v9M8.500 1v7" strokeWidth="1" />
          <path d="M2 3h3v5H2zM7 2h3v5H7z" fill="#444" stroke="none" />
          <path d="M9 12h6M12 9v6" strokeWidth="2" />
        </IconButton>
        <IconButton label="지표 추가">
          <path d="M1 8l4-5 4 4 5-5M1 4l4 4 4-5 4 4" strokeWidth="1" />
          <path d="M9 12h6M12 9v6" strokeWidth="2" />
        </IconButton>
        <IconButton label="저장">
          <path d="M1.500 1.500h11l2 2v11h-13zM4 2v4h7V2M4 14V9h8v5" />
        </IconButton>
        <IconButton label="설정">
          <circle cx="8" cy="8" r="4" strokeWidth="2.500" />
          <path d="M8 1v3M8 12v3M1 8h3M12 8h3M3 3l2 2M11 11l2 2M13 3l-2 2M5 11l-2 2" strokeWidth="2.500" />
        </IconButton>
      </div>
      <label className="ml-0.5 flex items-center gap-0.5 text-xs text-black">
        <input type="checkbox" className="h-[13px] w-[13px] appearance-none border border-[#888] bg-white" />D
      </label>
    </div>
  );
}

function QuoteBar() {
  return (
    <div className="flex h-[21px] items-center gap-0.5 text-xs leading-[19px] text-black">
      <div className="flex h-full w-[751px] items-center border border-[#8c8c8c] bg-[#f0f0f0] [&>span]:text-right">
        <span className="w-[73px] text-[#e8190a]">10,710 ▲</span>
        <span className="w-[49px] text-[#e8190a]">400</span>
        <span className="h-full w-[49px] border-r border-[#aaa] text-[#e8190a]">+3.88%</span>
        <span className="w-[71px]">3,867,040</span>
        <span className="w-[57px] text-[#1a4ac0]">82.02%</span>
        <span className="h-full w-[43px] border-r border-[#aaa] pr-0.5">30.85%</span>
        <span className="h-full w-[82px] border-r border-[#aaa] pr-0.5">42,877백만</span>
        <span className="w-[37px]">최우선</span>
        <span className="w-[46px] text-[#e8190a]">10,710</span>
        <span className="h-full w-[57px] border-r border-[#aaa] pr-1.5 text-[#e8190a]">10,700</span>
        <span className="w-[13px]">시</span>
        <span className="w-[42px] text-[#e8190a]">10,700</span>
        <span className="w-[19px]">고</span>
        <span className="w-[42px] text-[#e8190a]">11,760</span>
        <span className="w-[19px]">저</span>
        <span className="w-[42px] text-[#1a4ac0]">10,080</span>
      </div>
      <button type="button" className="h-full w-10 border border-[#8c8c8c] bg-[#f4d0cc]">
        매수
      </button>
      <button type="button" className="h-full w-10 border border-[#8c8c8c] bg-[#c8def4]">
        매도
      </button>
    </div>
  );
}

/* ---------- 하단 ---------- */

const RAISED = 'border border-t-white border-l-white border-r-[#777] border-b-[#777] bg-[#ececec]';

function PlayButton({ label, path }: { label: string; path: string }) {
  return (
    <button type="button" aria-label={label} className={`flex w-[17px] items-center justify-center ${RAISED}`}>
      <svg viewBox="0 0 10 10" className="h-2.5 w-2.5" fill="#000">
        <path d={path} />
      </svg>
    </button>
  );
}

function ToolIcon({ label, active, path }: { label: string; active?: boolean; path: string }) {
  return (
    <button
      type="button"
      aria-label={label}
      className={
        active
          ? 'flex w-[17px] items-center justify-center bg-white'
          : 'flex w-[17px] items-center justify-center'
      }
    >
      <svg viewBox="0 0 16 16" className="h-3.5 w-3.5" fill="none" stroke="#666" strokeWidth="1.500">
        <path d={path} />
      </svg>
    </button>
  );
}

function BottomBar() {
  return (
    <footer className="flex h-[18px] shrink-0 bg-[#f3f3f3]">
      <button
        type="button"
        aria-label="왼쪽으로"
        className={`flex w-4 shrink-0 items-center justify-center ${RAISED}`}
      >
        <svg viewBox="0 0 5 8" className="h-2 w-[5px]" fill="#000">
          <path d="M5 0v8L0 4z" />
        </svg>
      </button>
      <div className="flex-[515] bg-[#f6f6f6]" />
      <div className={`flex-[85] ${RAISED}`} />
      <div className="flex-[923] bg-[#f6f6f6]" />
      <PlayButton label="재생" path="M3 0l5 5-5 5z" />
      <PlayButton label="뒤로" path="M5 1v8L0 5zM10 1v8L5 5z" />
      <PlayButton label="정지" path="M1 1h8v8H1z" />
      <PlayButton label="앞으로" path="M0 1l5 4-5 4zM5 1l5 4-5 4z" />
      <div className="mx-1.5 flex w-[70px] flex-col">
        <input
          type="range"
          aria-label="재생 속도"
          defaultValue="8"
          className="mt-1 h-1 w-full appearance-none border-t border-[#777] bg-[#ddd] [&::-webkit-slider-thumb]:h-[10px] [&::-webkit-slider-thumb]:w-1 [&::-webkit-slider-thumb]:appearance-none [&::-webkit-slider-thumb]:border [&::-webkit-slider-thumb]:border-[#777] [&::-webkit-slider-thumb]:bg-[#eee]"
        />
        <div className="mt-auto flex justify-between px-0.5">
          {[0, 1, 2, 3, 4, 5, 6, 7, 8, 9].map((tick) => (
            <span key={tick} className="h-[3px] w-px bg-black" />
          ))}
        </div>
      </div>
      <div className="flex">
        <ToolIcon label="창 추가" path="M6 12H2V2h10v4M7 7h8v8H7zM11 7v8M7 11h8" />
        <ToolIcon label="창 겹치기" path="M5 10H1V2h9v3M5 5h10v9H5zM5 7h10" />
        <ToolIcon label="범위" path="M1 2h14M1 14h14M1 9l4 2 4-5 3 3 3-4" />
        <ToolIcon label="십자선" active path="M1 3h15M4 1v14M7 6l7 7M7 11V6h5" />
        <ToolIcon label="수평선" path="M0 3h15M1 12l4-1 3-6 3 5 3 1" />
        <ToolIcon label="수직선" path="M6 1v14M1 11l4-1 3-5 3 6 4-2" />
        <ToolIcon label="추세선" path="M2 13L12 1M1 12l4-2 4-5 2 6 4 1" />
        <ToolIcon label="지우기" path="M1 9l7-6h5L7 9zM1 9v4h5V9M7 13l6-6V3M10 11v4M12 11v4M15 11v4" />
        <ToolIcon label="그림 저장" path="M5 6V2h10v8h-3M1 6h11v8H1zM2 12l3-3 2 2 4-3" />
        <ToolIcon label="확대경" path="M10.500 6.500a4.500 4.500 0 1 1-9 0 4.500 4.500 0 0 1 9 0M9.500 10l4 4.500" />
        <ToolIcon label="축소" path="M2 7h11M2 8.500h11" />
        <ToolIcon label="확대" path="M2 7.500h12M2 8.500h12M7.500 2v12M8.500 2v12" />
        <ToolIcon label="자동" path="M3 13L7 3h1l4 10M4 13L8 3M5 10h6M11 13L7 3" />
      </div>
    </footer>
  );
}

export default function App() {
  return (
    <div className={`flex h-screen flex-col overflow-hidden bg-black pt-px pr-[3px] pb-[3px] pl-px ${FONT}`}>
      <TitleBar />
      <main className="ml-0.5 flex min-h-0 flex-1 flex-col bg-[#d1d1d1] px-[3px] pb-0.5">
        <div className="flex h-[51px] shrink-0 flex-col pt-1">
          <Toolbar />
          <QuoteBar />
        </div>
        <section className="relative flex min-h-0 flex-1 border-y border-l border-[#999]">
          <LeftAxis />
          <Plot />
          <RightAxis />
          <div className="absolute top-0.5 left-[45px] flex items-center gap-0.5">
            <span className="h-1.5 w-1 border border-[#777] bg-[#bbb]" />
            <span className="border border-[#bbb] bg-[#f0f0f0] px-0.5 text-[13px] leading-[13px] text-[#333]">
              라온테크 매물대 수(13)
            </span>
          </div>
        </section>
        <BottomBar />
      </main>
    </div>
  );
}
